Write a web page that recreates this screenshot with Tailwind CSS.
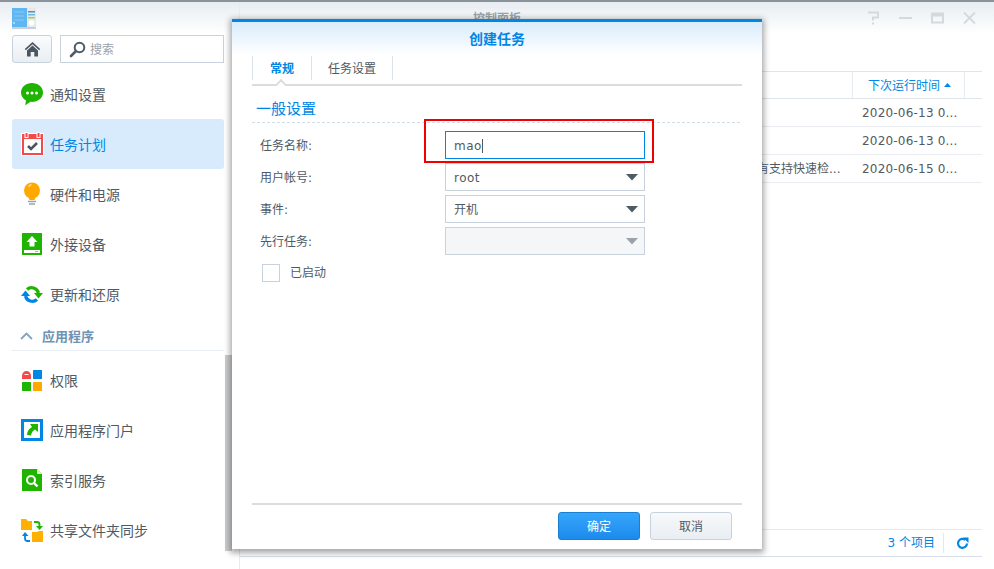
<!DOCTYPE html>
<html lang="zh-CN">
<head>
<meta charset="utf-8">
<script src="https://cdn.jsdelivr.net/npm/@tailwindcss/browser@4"></script>
</head>
<body class="m-0">
<div class="relative w-[994px] h-[569px] overflow-hidden bg-white text-[#505a64] text-[12px] font-['DejaVu_Sans','Noto_Sans_CJK_SC',sans-serif] flex flex-col">
  <div class="h-[2px] bg-[#8a939c] shrink-0"></div>
  <div class="flex flex-1 min-h-0">
    <!-- sidebar -->
    <aside class="w-[240px] shrink-0 border-r border-[#e6ebf1] relative flex flex-col">
      <div class="absolute left-0 right-0 top-0 h-[32px] bg-gradient-to-b from-[#e8edf2] to-white"></div>
      <div class="relative h-[33px] pl-[12px] pt-[6px] shrink-0">
        <svg width="24" height="21" viewBox="0 0 24 21"><rect x="0" y="0" width="15" height="19" fill="#5fb6f0"/><path d="M2 4h10M2 8h10M2 12h10" stroke="#86c9f5" stroke-width="1"/><rect x="1" y="14" width="2" height="2" fill="#a5dcf8"/><rect x="15" y="0" width="9" height="19" fill="#e6e9ec"/><rect x="16" y="3" width="7" height="1.500" fill="#7b8790"/><rect x="16" y="6" width="7" height="1.500" fill="#5cc0f0"/><rect x="16" y="9" width="7" height="1.500" fill="#9bd35a"/><circle cx="19.500" cy="15" r="2.800" fill="#fff"/><rect x="0" y="19" width="24" height="2" fill="#c9cfd5"/></svg>
      </div>
      <div class="relative flex gap-[8px] pl-[12px] shrink-0">
        <div class="w-[40px] h-[28px] rounded-[3px] border border-[#c8d2dc] bg-gradient-to-b from-[#fafcfd] to-[#e9eef3] flex items-center justify-center">
          <svg width="17" height="16" viewBox="0 0 17 16"><path d="M8.500 1 0.800 8l1 1.200L8.500 3.200l6.700 6 1-1.200z" fill="#4a5560"/><path d="M3 9.500 8.500 4.600 14 9.500V15.500H10.300V11H6.700v4.500H3z" fill="#4a5560"/></svg>
        </div>
        <div class="w-[164px] h-[28px] border border-[#c8d2dc] flex items-center pl-[8px] gap-[4px] text-[#9aa3ab]">
          <svg width="17" height="17" viewBox="0 0 17 17"><circle cx="10.500" cy="6.500" r="4.800" fill="none" stroke="#4f5b66" stroke-width="2"/><path d="M7 10 2 15" stroke="#4f5b66" stroke-width="2.600" stroke-linecap="round"/></svg>
          <span class="pt-[2px]">搜索</span>
        </div>
      </div>
      <nav class="relative mt-[6px] pl-[12px] pr-[15px] text-[14px] flex flex-col">
        <div class="h-[50px] flex items-center pl-[9px] gap-[7px]">
          <svg width="22" height="23" viewBox="0 0 22 23"><path d="M11 0C5 0 0 3.900 0 9.500c0 3.400 1.900 6.200 5 8l-.8 4.800 5.400-3.500c.5 0 .9.100 1.400.100 6 0 11-3.900 11-9.400S17 0 11 0z" fill="#1fb400"/><circle cx="6.500" cy="10" r="1.500" fill="#fff"/><circle cx="11" cy="10" r="1.500" fill="#fff"/><circle cx="15.500" cy="10" r="1.500" fill="#fff"/></svg>
          <span class="pt-[2px]">通知设置</span>
        </div>
        <div class="h-[50px] flex items-center pl-[9px] gap-[7px] bg-[#d7ebfd] rounded-[3px] text-[#0086e5]">
          <svg width="23" height="24" viewBox="0 0 23 24"><rect x="0" y="1" width="23" height="23" fill="#fff"/><rect x="1" y="2" width="21" height="21" fill="#f44a4a"/><rect x="3" y="7" width="17" height="14" fill="#fff"/><rect x="4" y="0.500" width="3" height="5" fill="#f44a4a" stroke="#fff" stroke-width="1"/><rect x="16" y="0.500" width="3" height="5" fill="#f44a4a" stroke="#fff" stroke-width="1"/><path d="m7 14 3 3 6-6" fill="none" stroke="#4a5560" stroke-width="2.600"/></svg>
          <span class="pt-[2px] -ml-[1px]">任务计划</span>
        </div>
        <div class="h-[50px] flex items-center pl-[9px] gap-[7px]">
          <svg width="22" height="24" viewBox="0 0 22 24"><circle cx="11" cy="8.500" r="8" fill="#ffa800"/><path d="M7.500 5a4 4 0 0 1 3-2.500" stroke="#ffd78a" stroke-width="1.500" fill="none"/><path d="M7.500 15h7l-1 3h-5z" fill="#ffa800"/><path d="M7 19.500h8M8 22h6" stroke="#9aa3ab" stroke-width="1.300"/></svg>
          <span class="pt-[2px]">硬件和电源</span>
        </div>
        <div class="h-[50px] flex items-center pl-[9px] gap-[7px]">
          <svg width="22" height="22" viewBox="0 0 22 22"><rect x="1" y="0" width="20" height="22" fill="#1fb400"/><path d="M11 3l5.500 6H13.500v4.500h-5V9H5.500z" fill="#fff"/><rect x="3" y="17" width="16" height="3" fill="#fff"/><rect x="14" y="18" width="3" height="1" fill="#ffa800"/></svg>
          <span class="pt-[2px]">外接设备</span>
        </div>
        <div class="h-[50px] flex items-center pl-[9px] gap-[7px]">
          <svg width="22" height="19" viewBox="0 0 22 19"><path d="M6 4.500A7 7 0 0 1 17.500 8" fill="none" stroke="#1fb400" stroke-width="3.200"/><path d="M13 8h9l-4.500 5.500z" fill="#1fb400"/><path d="M16 14.500A7 7 0 0 1 4.500 11" fill="none" stroke="#0086e5" stroke-width="3.200"/><path d="M0 11h9L4.500 5.500z" fill="#0086e5"/></svg>
          <span class="pt-[2px]">更新和还原</span>
        </div>
        <div class="h-[30px] mt-[2px] -ml-[12px] pl-[8px]">
          <div class="h-full flex items-center gap-[9px] text-[13px] font-bold text-[#6e93b4]">
            <svg class="ml-[12px]" width="13" height="8" viewBox="0 0 13 8"><path d="M1 7l5.500-5.500L12 7" fill="none" stroke="#84a3bd" stroke-width="1.800"/></svg>
            <span class="pt-[1px]">应用程序</span>
          </div>
        </div>
        <div class="h-px bg-[#e8eef3] -mt-[1px] w-[212px]"></div>
        <div class="h-[50px] mt-[4px] flex items-center pl-[9px] gap-[7px]">
          <svg width="22" height="21" viewBox="0 0 22 21"><path d="M1 9V6a4.500 5 0 0 1 9 0v3z" fill="#f44a4a"/><rect x="3.500" y="4" width="4" height="1" fill="#fff"/><rect x="12" y="0" width="9" height="9" rx=".5" fill="#0086e5"/><rect x="1" y="12" width="9" height="9" rx=".5" fill="#1fb400"/><rect x="12" y="12" width="9" height="9" rx=".5" fill="#ffa800"/></svg>
          <span class="pt-[2px]">权限</span>
        </div>
        <div class="h-[50px] flex items-center pl-[9px] gap-[7px]">
          <svg width="22" height="22" viewBox="0 0 22 22"><rect x="1.500" y="1.500" width="19" height="19" fill="#fff" stroke="#0086e5" stroke-width="3"/><path d="M9 5h8v8l-3-2.500c-2 1-3.500 3-4 6l-4-.5c0-3.500 2-6.500 5-8z" fill="#1fb400"/></svg>
          <span class="pt-[2px]">应用程序门户</span>
        </div>
        <div class="h-[50px] flex items-center pl-[9px] gap-[7px]">
          <svg width="22" height="22" viewBox="0 0 22 22"><path d="M1 0h15l5 5v17H1z" fill="#1fb400"/><path d="M16 0l5 5h-5z" fill="#d9f2d0"/><circle cx="10" cy="11" r="4" fill="none" stroke="#fff" stroke-width="2"/><path d="m13 14 3.500 3.500" stroke="#fff" stroke-width="2.400"/></svg>
          <span class="pt-[2px]">索引服务</span>
        </div>
        <div class="h-[50px] flex items-center pl-[9px] gap-[7px]">
          <svg width="22" height="23" viewBox="0 0 22 23"><path d="M0 0h5l2 2h4v9H0z" fill="#ffb000"/><path d="M11 13h5l2 -1h4v11H11z" fill="#ffb000"/><path d="M13 3h3a2.500 2.500 0 0 1 2.500 2.500V7" fill="none" stroke="#1fb400" stroke-width="1.800"/><path d="M15 7h7l-3.500 4z" fill="#1fb400"/><path d="M9 22H6.500A2.500 2.500 0 0 1 4 19.500V17" fill="none" stroke="#0086e5" stroke-width="1.800"/><path d="M1 17h6.500L4 13z" fill="#0086e5"/></svg>
          <span class="pt-[2px]">共享文件夹同步</span>
        </div>
      </nav>
      <div class="absolute left-[225px] top-[353px] w-[7px] h-[196px] bg-[#c9cbcd]"></div>
    </aside>
    <!-- main -->
    <main class="flex-1 min-w-0 relative flex flex-col pr-[12px]">
      <div class="absolute left-0 right-0 top-0 h-[32px] bg-gradient-to-b from-[#e8edf2] to-white"></div>
      <div class="relative h-[30px] shrink-0 flex">
        <div class="w-[514px] text-center text-[12px] font-bold text-[#9aa3ab] leading-none pt-[11px]">控制面板</div>
        <div class="flex-1 flex items-center justify-end gap-[19px] mr-[6px] pt-[2px] text-[#d5d9dd]">
          <svg width="13" height="14" viewBox="0 0 13 14"><path d="M1 1.500h10v5H6v3" fill="none" stroke="currentColor" stroke-width="2"/><rect x="5" y="11.500" width="2" height="2" fill="currentColor"/></svg>
          <svg width="13" height="14" viewBox="0 0 13 14"><rect x="0" y="6" width="13" height="2" fill="currentColor"/></svg>
          <svg width="13" height="14" viewBox="0 0 13 14"><rect x="1" y="2.500" width="11" height="9" fill="none" stroke="currentColor" stroke-width="2"/><rect x="1" y="2.500" width="11" height="3" fill="currentColor"/></svg>
          <svg width="13" height="14" viewBox="0 0 13 14"><path d="m1 1.500 11 11M12 1.500 1 12.500" stroke="currentColor" stroke-width="1.800"/></svg>
        </div>
      </div>
      <div class="relative mt-[39px] flex-1 min-h-0 flex flex-col">
        <div class="grid grid-cols-[613px_112px_17px] h-[28px] border-y border-[#dfe5ea] text-[#0086e5]">
          <div class="border-r border-[#e6ebf0]"></div>
          <div class="border-r border-[#e6ebf0] flex items-center pl-[15px] gap-[4px]">
            <span class="pt-[1px]">下次运行时间</span>
            <svg width="7" height="4" viewBox="0 0 7 4"><path d="M3.500 0 7 4H0z" fill="#0086e5"/></svg>
          </div>
          <div></div>
        </div>
        <div class="h-[28px] border-b border-[#e9edf1] flex items-center pl-[622px] tracking-[0.2px]">2020-06-13 0...</div>
        <div class="h-[28px] border-b border-[#e9edf1] flex items-center pl-[622px] tracking-[0.2px]">2020-06-13 0...</div>
        <div class="h-[28px] border-b border-[#e9edf1] flex items-center pl-[517px]"><span class="w-[105px] whitespace-nowrap">有支持快速检...</span><span class="tracking-[0.2px]">2020-06-15 0...</span></div>
        <div class="flex-1"></div>
        <div class="h-[27px] border-t border-[#e6ebf1] flex items-center justify-end text-[#0086e5] pr-[9px]">
          <span>3 个项目</span>
          <div class="w-px h-[20px] bg-[#e3e8ed] mx-[8px]"></div>
          <svg class="mx-[4px]" width="13" height="13" viewBox="0 0 13 13"><path d="M11 6.500A4.500 4.500 0 1 1 9.500 3" fill="none" stroke="#0086e5" stroke-width="2.200"/><path d="M7 0.500h5.500V6z" fill="#0086e5"/></svg>
        </div>
        <div class="h-px bg-[#d8dfea]"></div>
        <div class="h-[12px]"></div>
      </div>
    </main>
  </div>

  <!-- dialog -->
  <div class="absolute left-[232px] top-[19px] w-[530px] h-[530px] bg-white border-t-[3px] border-[#0086e5] shadow-[0_2px_6px_2px_rgba(0,0,0,0.35)] flex flex-col px-[20px]">
    <div class="absolute left-0 right-0 top-0 h-[33px] bg-gradient-to-b from-[#d8ecfc] to-white"></div>
    <div class="relative h-[33px] shrink-0 flex items-center justify-center text-[14px] font-bold text-[#0086e5] pt-[1px]">创建任务</div>
    <div class="relative h-[31px] shrink-0 border-b-2 border-[#dcdcdc] flex items-start">
      <div class="w-[60px] h-[24px] border-x border-[#dbe3ec] flex items-center justify-center font-bold text-[#0086e5] mt-[1px] pt-[2px]">常规</div>
      <div class="w-[81px] h-[24px] border-r border-[#dbe3ec] flex items-center justify-center mt-[1px] pt-[2px]">任务设置</div>
      <div class="absolute left-[24px] -bottom-[2px] w-[10px] h-[10px] overflow-hidden"><div class="w-[10px] h-[10px] bg-white border-l-2 border-t-2 border-[#dcdcdc] rotate-45 translate-y-[5px]"></div></div>
    </div>
    <div class="relative h-[37px] pl-[4px] pt-[13px] shrink-0 border-b border-dashed border-[#cfdcea] mr-[2px] text-[15px] text-[#0086e5] leading-[20px]">一般设置</div>
    <div class="flex flex-col gap-[4px] mt-[8px]">
      <div class="flex items-center h-[28px] pl-[8px]"><span class="w-[185px] pt-[2px]">任务名称:</span><div class="w-[200px] h-[28px] border border-[#0086e5] flex items-center pl-[8px] pt-[2px] tracking-[0.5px]">mao<span class="inline-block w-px h-[14px] bg-[#505a64]"></span></div></div>
      <div class="flex items-center h-[28px] pl-[8px]"><span class="w-[185px] pt-[2px]">用户帐号:</span><div class="w-[200px] h-[28px] border border-[#c8d2dc] flex items-center pl-[8px] pr-[6px] justify-between pt-[2px] tracking-[0.5px]">root<svg class="-mt-[2px]" width="12" height="7" viewBox="0 0 12 7"><path d="M0 0h12L6 6.500z" fill="#505a64"/></svg></div></div>
      <div class="flex items-center h-[28px] pl-[8px]"><span class="w-[185px] pt-[2px]">事件:</span><div class="w-[200px] h-[28px] border border-[#c8d2dc] flex items-center pl-[8px] pr-[6px] justify-between pt-[2px]">开机<svg class="-mt-[2px]" width="12" height="7" viewBox="0 0 12 7"><path d="M0 0h12L6 6.500z" fill="#505a64"/></svg></div></div>
      <div class="flex items-center h-[28px] pl-[8px]"><span class="w-[185px] pt-[2px]">先行任务:</span><div class="w-[200px] h-[28px] border border-[#c8d2dc] bg-[#f5f6f8] flex items-center justify-end pr-[6px]"><svg width="12" height="7" viewBox="0 0 12 7"><path d="M0 0h12L6 6.500z" fill="#9aa3ab"/></svg></div></div>
    </div>
    <div class="flex items-center mt-[9px] pl-[10px] gap-[10px]">
      <div class="w-[18px] h-[18px] border border-[#c8d2dc]"></div>
      <span>已启动</span>
    </div>
    <div class="flex-1"></div>
    <div class="h-[46px] shrink-0 border-t-2 border-[#dcdcdc] flex items-start justify-end gap-[10px] pt-[7px] pr-[10px]">
      <div class="w-[82px] h-[28px] rounded-[3px] border border-[#1a7fd0] bg-gradient-to-b from-[#36a6fb] to-[#1c8aec] text-white flex items-center justify-center pt-[2px]">确定</div>
      <div class="w-[82px] h-[28px] rounded-[3px] border border-[#c8d2dc] bg-gradient-to-b from-[#f7f9fb] to-[#e9eef3] flex items-center justify-center pt-[2px]">取消</div>
    </div>
  </div>
  <!-- annotation -->
  <div class="absolute left-[424px] top-[119px] w-[230px] h-[44px] border-2 border-[#f00000]"></div>
</div>
</body>
</html>
